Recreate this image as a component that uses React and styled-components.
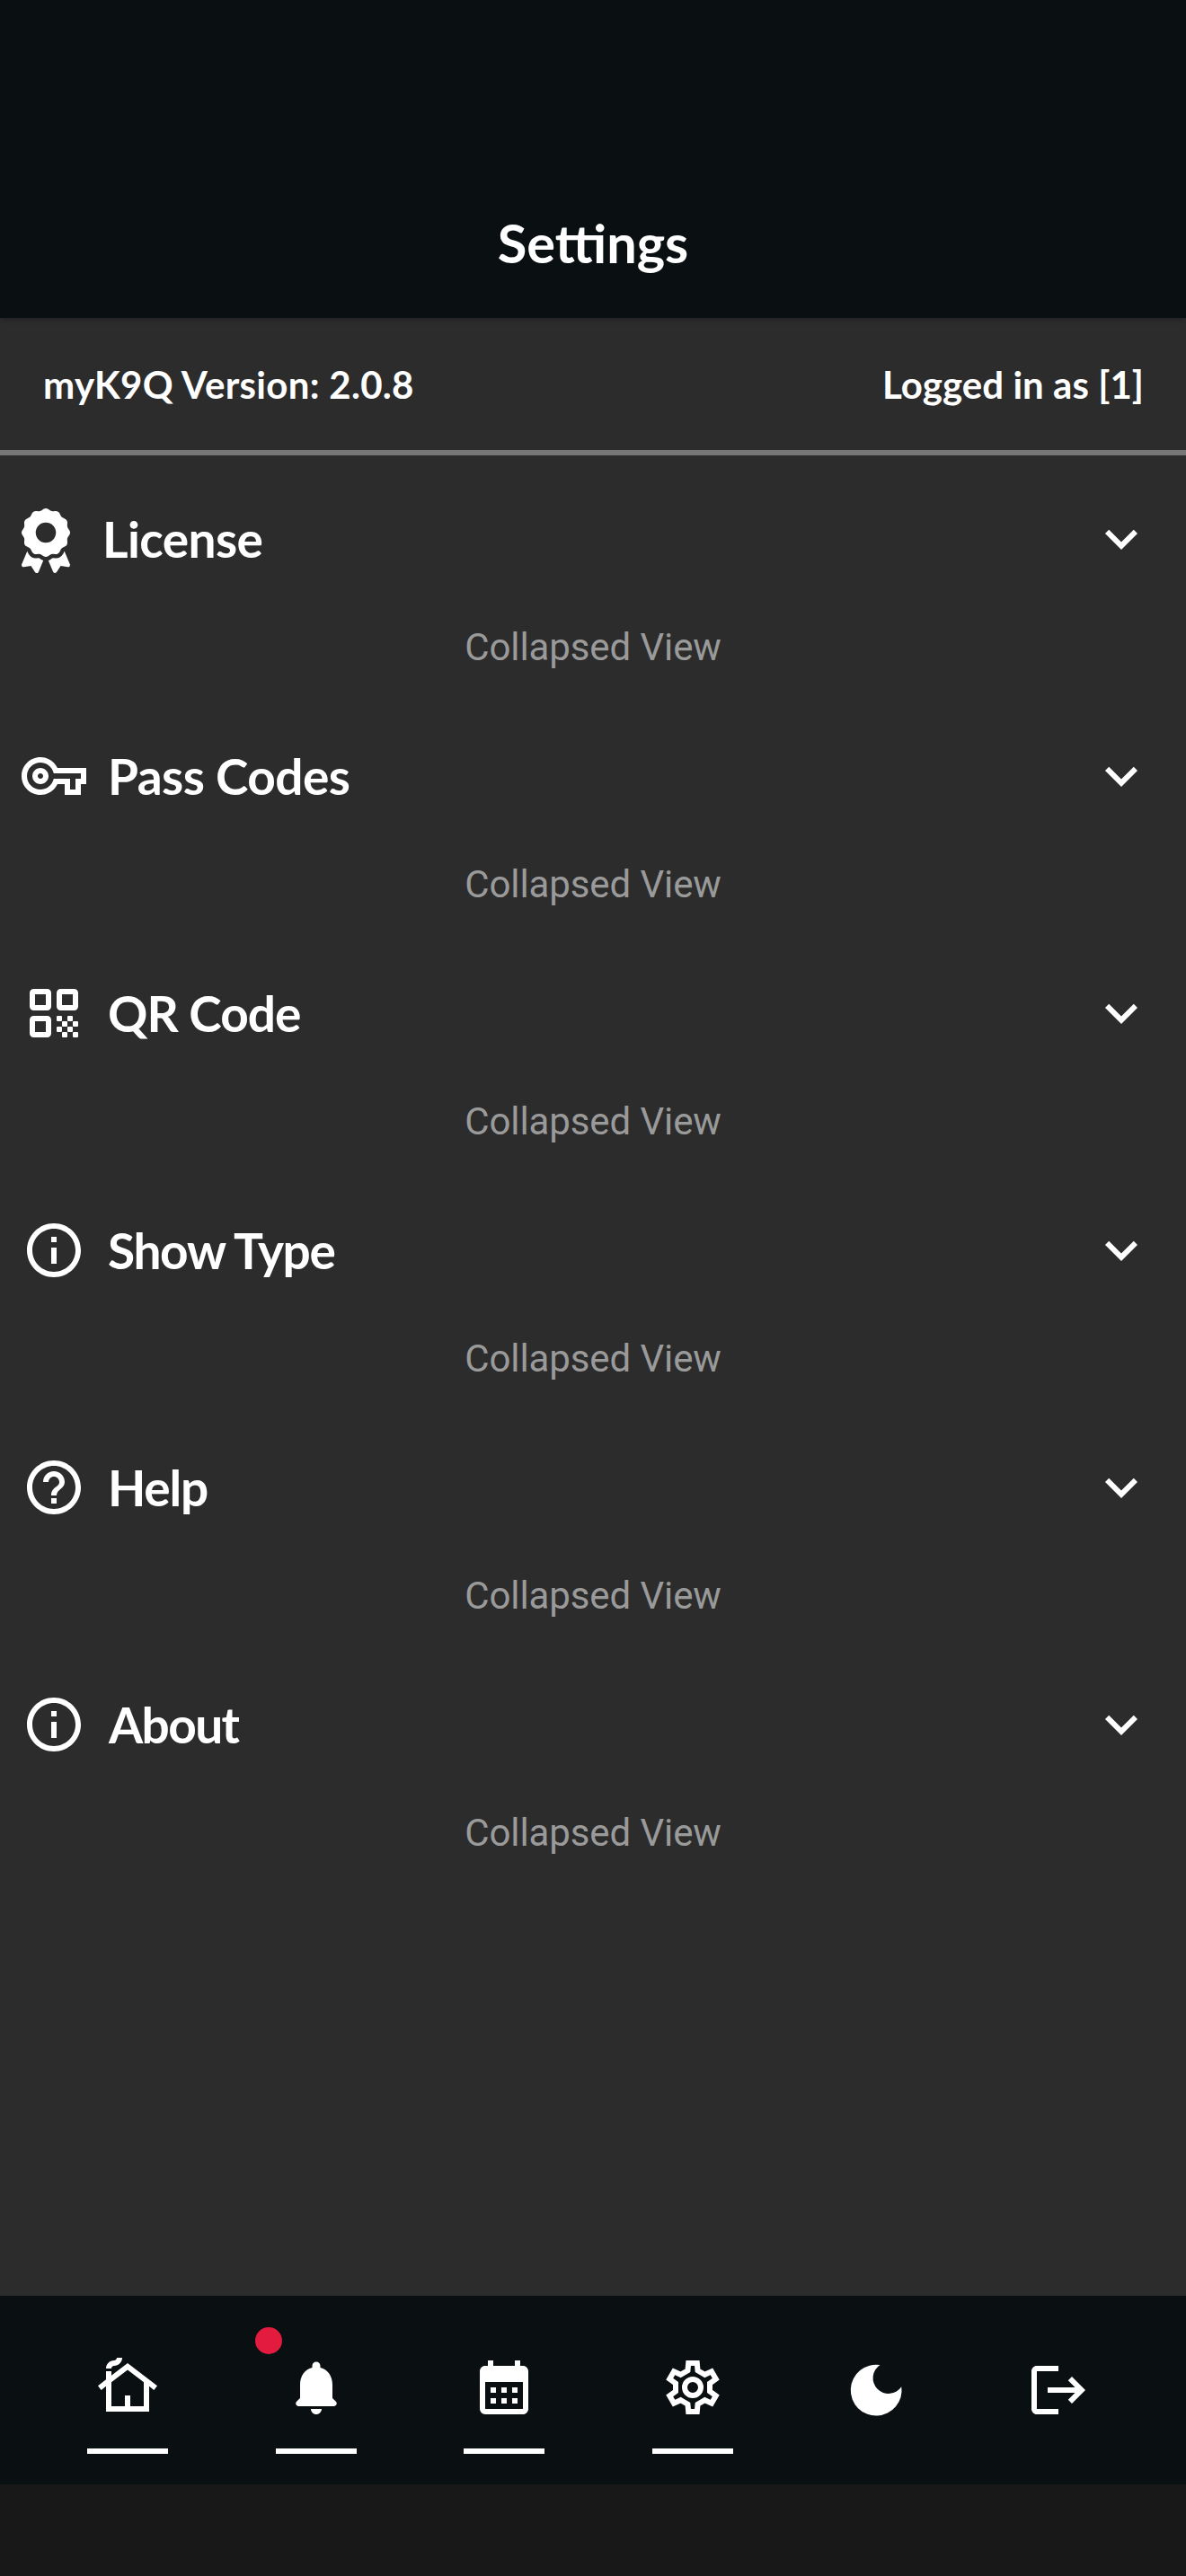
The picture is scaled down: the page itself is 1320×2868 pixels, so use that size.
import React from 'react';
import styled, { createGlobalStyle } from 'styled-components';
import { FaAward } from 'react-icons/fa6';
import {
  MdOutlineVpnKey,
  MdInfoOutline,
  MdHelpOutline,
  MdExpandMore,
  MdOutlineCottage,
  MdCalendarMonth,
  MdLogout,
} from 'react-icons/md';

const GlobalStyle = createGlobalStyle`
  *, *::before, *::after { box-sizing: border-box; }
  body { margin: 0; background: #2c2c2c; }
`;

const Screen = styled.div`
  display: flex;
  flex-direction: column;
  width: 1320px;
  height: 2868px;
  background: #2c2c2c;
  color: #fff;
  font-family: Lato, 'Open Sans', sans-serif;
  overflow: hidden;
`;

const Header = styled.header`
  display: flex;
  align-items: center;
  justify-content: center;
  height: 354px;
  padding-top: 186px;
  background: #0a0f12;
  box-shadow: 0 1px 6px rgba(0, 0, 0, 0.3);
`;

const Title = styled.h1`
  margin: 0;
  font-size: 59.5px;
  font-weight: 700;
  line-height: 76px;
`;

const VersionBar = styled.div`
  display: flex;
  align-items: center;
  justify-content: space-between;
  height: 153px;
  padding: 0 47px 0 48px;
  border-bottom: 6px solid #767676;
`;

const VersionText = styled.span`
  font-size: 42px;
  font-weight: 700;
  line-height: 54px;
  letter-spacing: ${p => p.$spacing}px;
  white-space: nowrap;
`;

const Sections = styled.main`
  flex: 1;
  padding-top: 57px;
`;

const Section = styled.section`
  height: 264px;
`;

const SectionHead = styled.div`
  display: flex;
  align-items: center;
  height: 72px;
  padding: 0 36px 0 24px;
  svg { display: block; flex: none; }
`;

const AwardIcon = styled(FaAward)`
  width: 54px;
  height: 72px;
  margin-top: 4px;
`;

const SectionName = styled.h2`
  flex: 1;
  margin: 0 0 0 ${p => p.$gap}px;
  font-size: 55px;
  font-weight: 700;
  line-height: 66px;
  letter-spacing: ${p => p.$spacing}px;
`;

const Collapsed = styled.p`
  margin: 60px 0 0;
  color: #9a9a9a;
  font-family: Roboto, sans-serif;
  font-size: 42px;
  line-height: 50px;
  letter-spacing: -0.1px;
  text-align: center;
`;

const NavBar = styled.nav`
  display: flex;
  align-items: flex-start;
  height: 210px;
  padding: 66px 0 0 97px;
  background: #0a0f12;
`;

const NavItem = styled.div`
  position: relative;
  display: flex;
  flex-direction: column;
  align-items: center;
  width: ${p => p.$width}px;
  margin: ${p => p.$drop || 0}px ${p => p.$after}px 0 0;
  svg { display: block; flex: none; }
`;

const Underline = styled.span`
  width: 90px;
  height: 6px;
  margin-top: 31.5px;
  background: #fff;
`;

const Badge = styled.span`
  position: absolute;
  top: -31.5px;
  left: -22.5px;
  width: 30px;
  height: 30px;
  border-radius: 50%;
  background: #e31b3f;
`;

const GestureArea = styled.footer`
  height: 102px;
  background: #181818;
`;

const Glyph = ({ children }) => (
  <svg width="72" height="72" viewBox="0 0 24 24" fill="currentColor">{children}</svg>
);

const QR_FRAMES = [[3, 3], [13, 3], [3, 13]];
const QR_DOTS = [[13, 13], [17, 13], [15, 15], [19, 15], [13, 17], [17, 17], [15, 19], [19, 19]];

// Each frame is an 8-unit rounded square with a sharp 4-unit hole.
const QrIcon = () => (
  <Glyph>
    {QR_FRAMES.map(([x, y]) => (
      <path
        key={`${x}-${y}`}
        fillRule="evenodd"
        d={`M${x + 1.5} ${y}h5a1.5 1.5 0 0 1 1.5 1.5v5a1.5 1.5 0 0 1-1.5 1.5h-5a1.5 1.5 0 0 1-1.5-1.5v-5a1.5 1.5 0 0 1 1.5-1.5zM${x + 2} ${y + 2}h4v4h-4z`}
      />
    ))}
    {QR_DOTS.map(([x, y]) => (
      <rect key={`${x}-${y}`} x={x} y={y} width="2" height="2" rx="0.35" />
    ))}
  </Glyph>
);

const BellIcon = () => (
  <Glyph>
    <path d="M12 22c1.1 0 2-.9 2-2h-4c0 1.1.89 2 2 2zm6-6v-5c0-3.07-1.64-5.64-4.5-6.32V4c0-.83-.67-1.5-1.5-1.5s-1.5.67-1.5 1.5v.68C7.63 5.36 6 7.92 6 11v5l-1.29 1.29c-.63.63-.19 1.71.7 1.71h13.17c.89 0 1.34-1.08.71-1.71L18 16z" />
  </Glyph>
);

// One tooth of the gear, relative to its centre; repeated every 60 degrees.
const TOOTH = [[-1.85, -6.25], [-1.6, -9], [1.6, -9], [1.85, -6.25]];
const gearOutline = Array.from({ length: 6 }, (_, i) => {
  const a = (i * Math.PI) / 3;
  return TOOTH.map(([x, y]) => {
    const px = 12 + x * Math.cos(a) - y * Math.sin(a);
    const py = 12 + x * Math.sin(a) + y * Math.cos(a);
    return `${px.toFixed(2)},${py.toFixed(2)}`;
  }).join(' ');
}).join(' ');

const GearIcon = () => (
  <Glyph>
    <polygon points={gearOutline} fill="none" stroke="currentColor" strokeWidth="2" />
    <circle cx="12" cy="12" r="3" fill="none" stroke="currentColor" strokeWidth="2" />
  </Glyph>
);

const MoonIcon = () => (
  <svg width="72" height="72" viewBox="0 0 72 72" fill="currentColor">
    <path d="M40.5 8.1A28.4 28.4 0 1 0 64.3 32.2A17.3 17.3 0 1 1 40.5 8.1Z" />
  </svg>
);

const SECTIONS = [
  { name: 'License', icon: <AwardIcon />, gap: 36, spacing: -0.6 },
  { name: 'Pass Codes', icon: <MdOutlineVpnKey size={72} />, gap: 24, spacing: -0.55 },
  { name: 'QR Code', icon: <QrIcon />, gap: 24, spacing: -0.95 },
  { name: 'Show Type', icon: <MdInfoOutline size={72} />, gap: 24, spacing: -1.35 },
  { name: 'Help', icon: <MdHelpOutline size={72} />, gap: 24, spacing: -1.2 },
  { name: 'About', icon: <MdInfoOutline size={72} />, gap: 25, spacing: -1.6 },
];

const TABS = [
  { id: 'home', icon: <MdOutlineCottage size={72} />, width: 90, after: 119.5, line: true },
  { id: 'alerts', icon: <BellIcon />, width: 90, after: 119.5, line: true, badge: true },
  { id: 'calendar', icon: <MdCalendarMonth size={72} />, width: 90, after: 119.5, line: true },
  { id: 'settings', icon: <GearIcon />, width: 90, after: 123, line: true },
  { id: 'theme', icon: <MoonIcon />, width: 72, after: 131.5, drop: 3 },
  { id: 'logout', icon: <MdLogout size={72} />, width: 72, after: 0, drop: 3 },
];

export default function App() {
  return (
    <>
      <GlobalStyle />
      <Screen>
        <Header>
          <Title>Settings</Title>
        </Header>
        <VersionBar>
          <VersionText $spacing={0.29}>myK9Q Version: 2.0.8</VersionText>
          <VersionText $spacing={0.04}>Logged in as [1]</VersionText>
        </VersionBar>
        <Sections>
          {SECTIONS.map(s => (
            <Section key={s.name}>
              <SectionHead>
                {s.icon}
                <SectionName $gap={s.gap} $spacing={s.spacing}>{s.name}</SectionName>
                <MdExpandMore size={72} />
              </SectionHead>
              <Collapsed>Collapsed View</Collapsed>
            </Section>
          ))}
        </Sections>
        <NavBar>
          {TABS.map(t => (
            <NavItem key={t.id} $width={t.width} $after={t.after} $drop={t.drop}>
              {t.icon}
              {t.badge && <Badge />}
              {t.line && <Underline />}
            </NavItem>
          ))}
        </NavBar>
        <GestureArea />
      </Screen>
    </>
  );
}
